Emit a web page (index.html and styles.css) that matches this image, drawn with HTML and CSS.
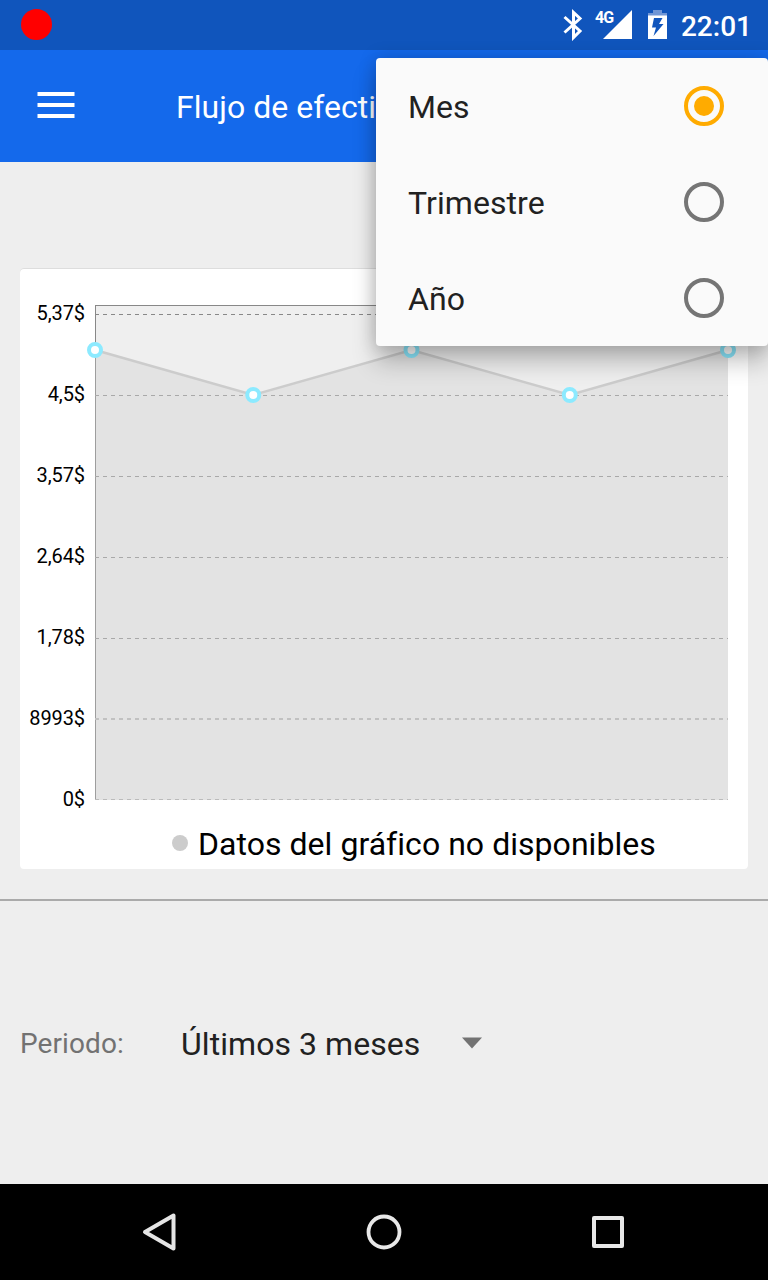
FILE: index.html
```html
<!DOCTYPE html>
<html lang="es">
<head>
<meta charset="utf-8">
<title>Flujo de efectivo</title>
<link rel="stylesheet" href="styles.css">
</head>
<body>
<div class="screen">
  <header class="status-bar">
    <span class="record-dot"></span>
    <div class="status-icons">
      <svg class="bluetooth" width="20" height="32" viewBox="0 0 20 32"><path d="M1.500 8 17 22 10.500 28.500V3.500L17 9.500 1.500 23.500" fill="none" stroke="#fff" stroke-width="3"/></svg>
      <div class="network"><span class="network-type">4G</span><svg width="30" height="30" viewBox="0 0 30 30"><path d="M0 30 29 1V30Z" fill="#fff"/></svg></div>
      <svg class="battery" width="20" height="30" viewBox="0 0 20 30"><path d="M5 0H14V3H19V6H0V3H5Z" fill="#7096d5"/><path fill-rule="evenodd" fill="#fff" d="M0 5.500H19V29H0ZM6 8 4 17.500H8L5.500 26 15.500 14H11L14.500 8Z"/></svg>
      <span class="clock">22:01</span>
    </div>
  </header>
  <nav class="app-bar">
    <svg class="menu-icon" width="38" height="28" viewBox="0 0 38 28"><path d="M0.500 3H37.500M0.500 14H37.500M0.500 25H37.500" stroke="#fff" stroke-width="4"/></svg>
    <h1 class="title">Flujo de efectivo</h1>
  </nav>
  <main class="content">
    <section class="card">
      <div class="chart">
        <div class="axis-labels">
          <span>5,37$</span><span>4,5$</span><span>3,57$</span><span>2,64$</span><span>1,78$</span><span>8993$</span><span>0$</span>
        </div>
        <svg class="plot" width="663" height="540" viewBox="85 268 663 540">
          <rect x="95" y="305" width="633" height="495" fill="#efefef"/>
          <path d="M95 314.500H728" stroke="#888" stroke-dasharray="4 4"/>
          <path d="M96 305.500H728" stroke="#888"/>
          <path d="M95.500 305V800" stroke="#888"/>
          <path d="M95 395.500H728M95 476.500H728M95 557.500H728M95 638.500H728" stroke="#999" stroke-dasharray="4 4"/>
          <path d="M95 350 253.250 395 411.500 350 569.750 395 728 350V800H95Z" fill="#ccc" fill-opacity=".33"/>
          <path d="M95 719H728" stroke="#c1c1c1" stroke-width="2" stroke-dasharray="4 4"/>
          <path d="M95 799.500H728" stroke="#bbb" stroke-dasharray="4 4"/>
          <path d="M95 350 253.250 395 411.500 350 569.750 395 728 350" fill="none" stroke="#ccc" stroke-width="2.500"/>
          <g fill="#fff" stroke="#8ceaff" stroke-width="4">
            <circle cx="95" cy="350" r="6"/><circle cx="253.250" cy="395" r="6"/><circle cx="411.500" cy="350" r="6"/><circle cx="569.750" cy="395" r="6"/><circle cx="728" cy="350" r="6"/>
          </g>
        </svg>
      </div>
      <div class="legend"><span class="legend-dot"></span><span>Datos del gráfico no disponibles</span></div>
    </section>
    <hr class="divider">
    <section class="period">
      <span class="period-label">Periodo:</span>
      <span class="period-value">Últimos 3 meses</span>
      <svg class="caret" width="20" height="12" viewBox="0 0 20 12"><path d="M0 0.500H20L10 11.500Z" fill="#727272"/></svg>
    </section>
  </main>
  <footer class="nav-bar">
    <svg width="36" height="40" viewBox="0 0 36 40"><path d="M5 20 33.500 3.500V36.500Z" fill="none" stroke="#e5e5e5" stroke-width="4" stroke-linejoin="round"/></svg>
    <svg width="36" height="36" viewBox="0 0 36 36"><circle cx="18" cy="18" r="15.500" fill="none" stroke="#e8e8e8" stroke-width="3.800"/></svg>
    <svg width="32" height="32" viewBox="0 0 32 32"><rect x="2" y="2" width="28" height="28" fill="none" stroke="#e8e8e8" stroke-width="4" stroke-linejoin="round"/></svg>
  </footer>
  <div class="popup">
    <div class="option"><span>Mes</span><span class="radio selected"></span></div>
    <div class="option"><span>Trimestre</span><span class="radio"></span></div>
    <div class="option"><span>Año</span><span class="radio"></span></div>
  </div>
</div>
</body>
</html>
```
FILE: styles.css
```css
* { box-sizing: border-box; }
body { margin: 0; font-family: Roboto, sans-serif; }
svg { display: block; flex: none; }
.screen { position: relative; width: 768px; height: 1280px; overflow: hidden; display: flex; flex-direction: column; background: #eee; }
.status-bar { height: 50px; background: #1055bc; display: flex; justify-content: space-between; padding: 0 17px 0 21px; }
.record-dot { width: 31px; height: 31px; margin-top: 9px; border-radius: 50%; background: #f00; }
.status-icons { display: flex; align-items: flex-start; color: #fff; }
.bluetooth { margin: 9px 12px 0 0; }
.network { display: flex; margin: 9px 15px 0 0; }
.network-type { width: 18px; margin-right: -10px; font-size: 16px; line-height: 18px; font-weight: 700; letter-spacing: -1px; white-space: nowrap; }
.battery { margin: 10px 13px 0 0; }
.clock { font-size: 28px; line-height: 34px; margin: 10px -1px 0 0; font-weight: 500; }
.app-bar { height: 112px; background: #1469eb; display: flex; align-items: center; padding: 0 37px; }
.menu-icon { margin-top: -2px; }
.title { margin: 2px 0 0 101px; font-size: 32px; line-height: 40px; font-weight: 400; letter-spacing: .04px; color: #fff; white-space: nowrap; }
.content { flex: 1; display: flex; flex-direction: column; padding-top: 106px; }
.card { height: 601px; margin: 0 20px 30px; background: #fff; border-radius: 4px; box-shadow: inset 0 1px 0 #ddd; }
.chart { display: flex; height: 540px; }
.axis-labels { width: 65px; padding-top: 33px; display: flex; flex-direction: column; gap: 57px; font-size: 20px; line-height: 24px; letter-spacing: -.1px; text-align: right; color: #000; }
.legend { display: flex; align-items: center; gap: 10px; height: 61px; padding: 11px 0 0 152px; font-size: 32px; line-height: 40px; letter-spacing: .04px; color: #000; white-space: nowrap; }
.legend-dot { width: 16px; height: 16px; margin-top: -3px; border-radius: 50%; background: #ccc; }
.divider { width: 100%; height: 2px; margin: 0; border: 0; background: #aaa; }
.period { display: flex; align-items: center; flex: 1; padding: 2px 20px 0; white-space: nowrap; }
.period-label { width: 161px; font-size: 28px; letter-spacing: .1px; color: #727272; }
.period-value { width: 281px; font-size: 32px; letter-spacing: .06px; color: #212121; }
.caret { margin-top: -2px; }
.nav-bar { height: 96px; background: #000; display: flex; align-items: center; justify-content: space-between; padding: 0 144px 0 140px; }
.popup { position: absolute; top: 58px; right: 0; width: 392px; height: 288px; background: #fafafa; border-radius: 4px; box-shadow: 0 16px 24px rgba(0, 0, 0, .23), 0 0 18px rgba(0, 0, 0, .18); }
.option { height: 96px; padding: 0 44px 0 32px; display: flex; align-items: center; justify-content: space-between; font-size: 32px; line-height: 40px; letter-spacing: .08px; color: #212121; }
.option > span:first-child { margin-top: 2px; }
.radio { width: 40px; height: 40px; border: 4px solid #757575; border-radius: 50%; display: grid; place-items: center; }
.radio.selected { border-color: #ffab00; }
.radio.selected::after { content: ""; width: 20px; height: 20px; border-radius: 50%; background: #ffab00; }
```
